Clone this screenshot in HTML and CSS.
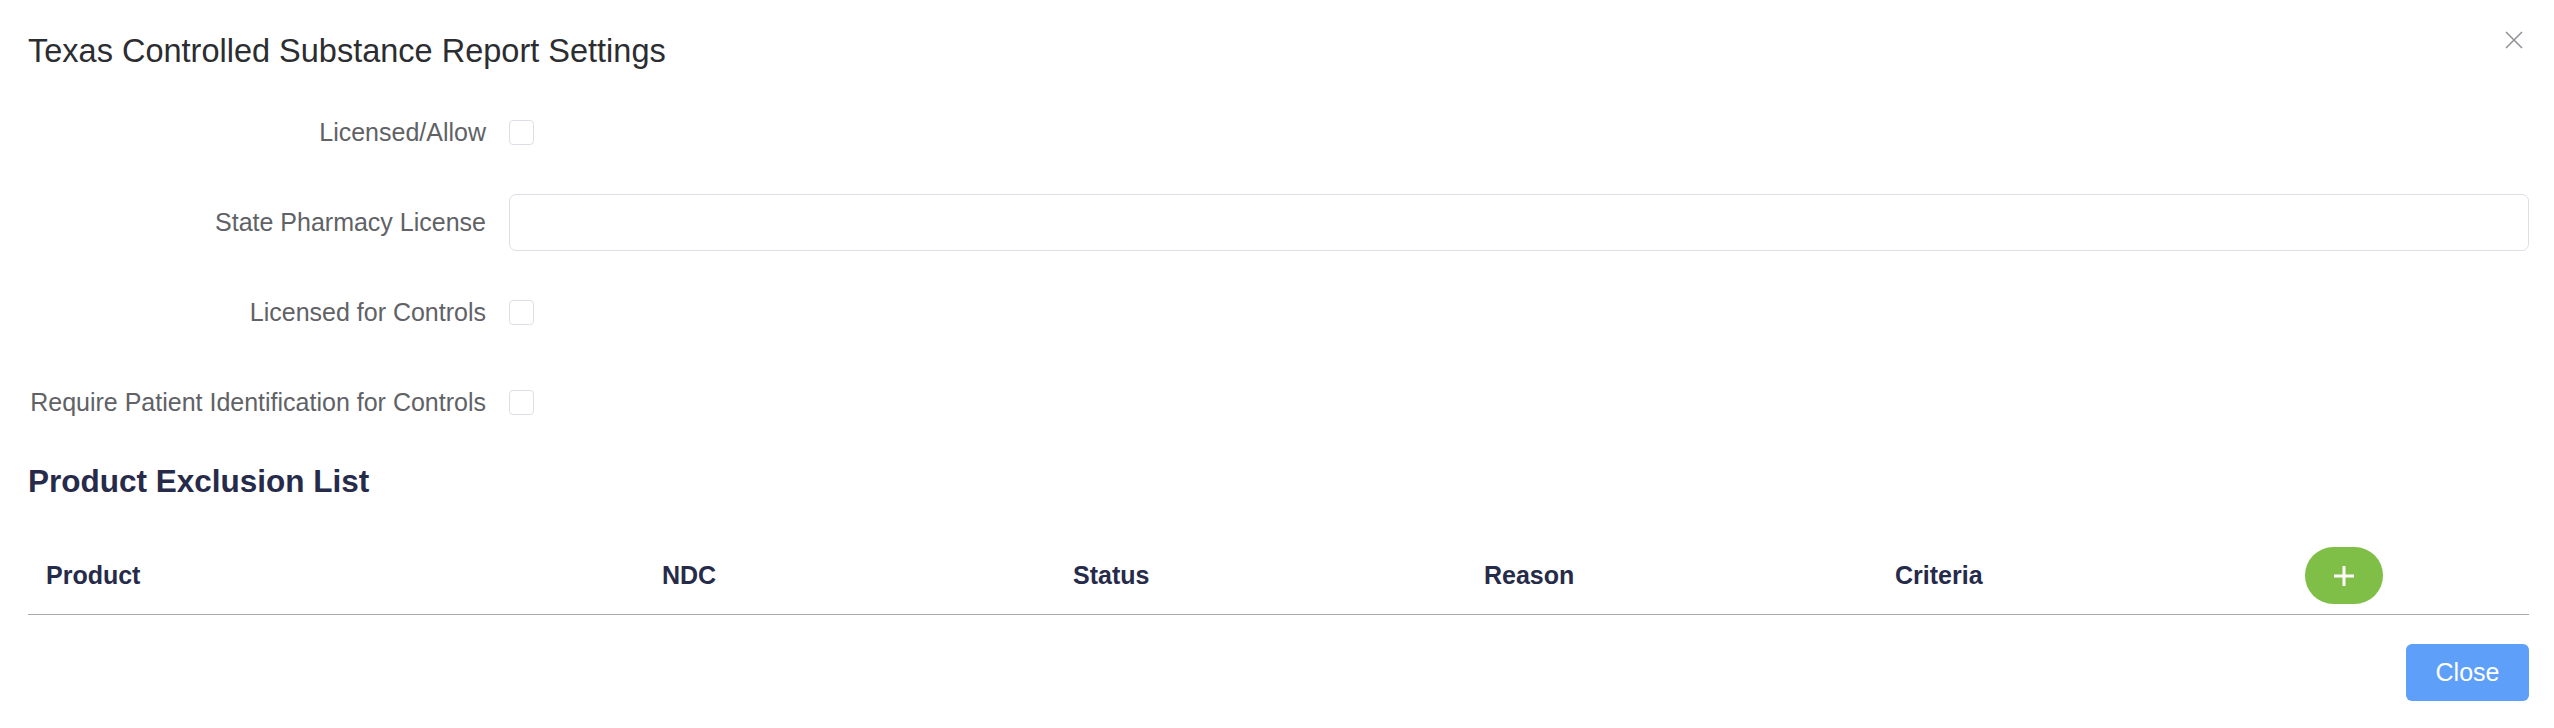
FILE: index.html
```html
<!DOCTYPE html>
<html>
<head>
<meta charset="utf-8">
<link rel="stylesheet" href="styles.css">
</head>
<body>
<div class="modal">
  <div class="modal-header">
    <h2 class="modal-title">Texas Controlled Substance Report Settings</h2>
    <button class="close-x" aria-label="Close">
      <svg width="18" height="18" viewBox="0 0 18 18"><path d="M1 1L17 17M17 1L1 17" stroke="#909399" stroke-width="1.6" fill="none"/></svg>
    </button>
  </div>
  <form class="form">
    <label class="form-label">Licensed/Allow</label>
    <div class="form-control"><span class="checkbox"></span></div>
    <label class="form-label">State Pharmacy License</label>
    <div class="form-control"><input class="text-input" type="text"></div>
    <label class="form-label">Licensed for Controls</label>
    <div class="form-control"><span class="checkbox"></span></div>
    <label class="form-label">Require Patient Identification for Controls</label>
    <div class="form-control"><span class="checkbox"></span></div>
  </form>
  <h3 class="section-title">Product Exclusion List</h3>
  <div class="table-head">
    <div class="th">Product</div>
    <div class="th">NDC</div>
    <div class="th">Status</div>
    <div class="th">Reason</div>
    <div class="th">Criteria</div>
    <div class="th">
      <button class="add-btn" aria-label="Add">
        <svg width="22" height="22" viewBox="0 0 22 22"><path d="M11 1V21M1 11H21" stroke="#fff" stroke-width="3" fill="none"/></svg>
      </button>
    </div>
  </div>
  <div class="footer">
    <button class="btn-primary">Close</button>
  </div>
</div>
</body>
</html>
```

FILE: styles.css
```css
* { box-sizing: border-box; }
html, body {
  margin: 0;
  background: #ffffff;
}
body {
  font-family: "Liberation Sans", Arial, Helvetica, sans-serif;
  color: #606266;
}
.modal {
  padding: 31px 25px 20px 28px;
}
.modal-header {
  display: flex;
  justify-content: space-between;
  align-items: flex-start;
}
.modal-title {
  margin: 0;
  font-size: 32.5px;
  line-height: 40px;
  font-weight: normal;
  color: #2b2d30;
}
.close-x {
  border: 0;
  background: transparent;
  padding: 0;
  margin: 0 6px 0 0;
  width: 18px;
  height: 18px;
  display: flex;
  cursor: pointer;
}
.form {
  margin-top: 33px;
  display: grid;
  grid-template-columns: 481px 1fr;
  grid-auto-rows: 57px;
  row-gap: 33px;
}
.form-label {
  display: flex;
  align-items: center;
  justify-content: flex-end;
  padding-right: 23px;
  font-size: 25px;
  color: #606266;
  white-space: nowrap;
}
.form-control {
  display: flex;
  align-items: center;
}
.checkbox {
  display: block;
  width: 25px;
  height: 25px;
  border: 1.5px solid #dcdfe6;
  border-radius: 4px;
  background: #fff;
}
.text-input {
  width: 100%;
  height: 57px;
  border: 1.5px solid #dcdfe6;
  border-radius: 7px;
  background: #fff;
  font-size: 25px;
  padding: 0 20px;
  outline: none;
}
.section-title {
  margin: 32px 0 0 0;
  font-size: 31.5px;
  line-height: 36px;
  font-weight: bold;
  color: #262b4a;
}
.table-head {
  margin-top: 38px;
  display: grid;
  grid-template-columns: 616px 411px 411px 411px 411px 1fr;
  border-bottom: 1px solid #a9a9a9;
  padding: 10px 0;
}
.th {
  display: flex;
  align-items: center;
  padding-left: 18px;
  font-size: 25px;
  font-weight: bold;
  color: #262b4a;
  height: 57px;
}
.th:last-child {
  padding-left: 17px;
}
.add-btn {
  width: 78px;
  height: 57px;
  border: 0;
  border-radius: 29px;
  background: #80bf47;
  display: flex;
  align-items: center;
  justify-content: center;
  padding: 0;
  cursor: pointer;
}
.footer {
  margin-top: 29px;
  display: flex;
  justify-content: flex-end;
}
.btn-primary {
  width: 123px;
  height: 57px;
  border: 0;
  border-radius: 6px;
  background: #5e9ffa;
  color: #ffffff;
  font-family: "Liberation Sans", Arial, Helvetica, sans-serif;
  font-size: 25px;
  cursor: pointer;
}
```
